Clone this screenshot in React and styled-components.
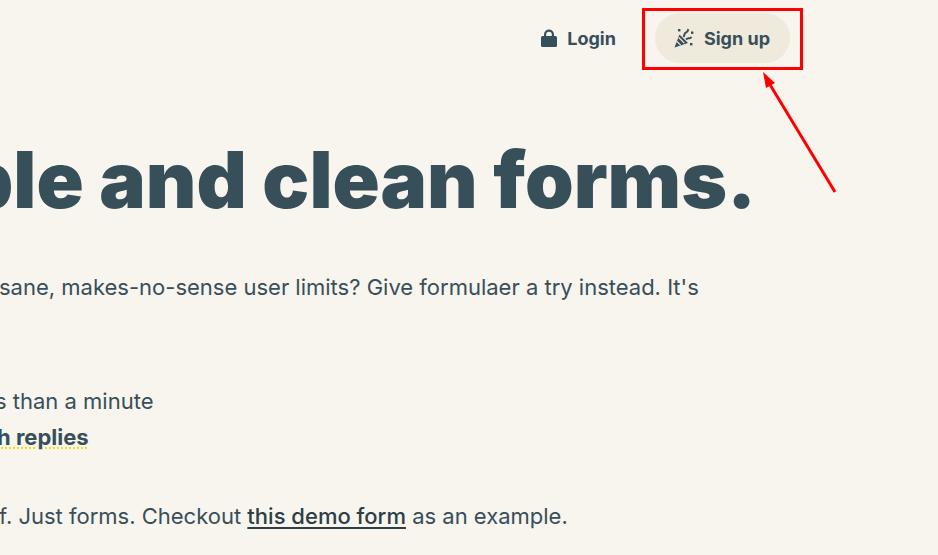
import React from "react";
import styled, { createGlobalStyle } from "styled-components";

const Global = createGlobalStyle`
  html, body { margin: 0; padding: 0; background: #f8f4ee; }
  body { width: 938px; height: 555px; overflow: hidden; font-family: Inter, "Liberation Sans", sans-serif; color: #374f59; }
`;
const Page = styled.div`
  position: relative;
  width: 938px;
  height: 555px;
  overflow: hidden;
`;
const Nav = styled.nav`
  display: flex;
  justify-content: flex-end;
  align-items: center;
  gap: 12px;
  height: 50px;
  padding: 13px 148px 0 0;
`;
const NavItem = styled.a`
  display: flex;
  align-items: center;
  gap: 10px;
  height: 50px;
  padding: 0 ${(p) => (p.$pill ? "20px" : "27px")} 0 ${(p) => (p.$pill ? "19px" : "0")};
  border-radius: 25px;
  background: ${(p) => (p.$pill ? "#f0eadd" : "transparent")};
  font-size: 18px;
  font-weight: 700;
  white-space: nowrap;
`;
const Title = styled.h1`
  margin: 74px 0 0 ${(p) => p.$shift}px;
  font-size: 78px;
  line-height: 86px;
  font-weight: 900;
  white-space: nowrap;
`;
const Text = styled.p`
  margin: ${(p) => p.$top}px 0 0 ${(p) => p.$shift}px;
  font-size: 22px;
  line-height: 36px;
  white-space: nowrap;
`;
const Strong = styled.strong`
  font-weight: 700;
  text-decoration: underline dotted #f5d90a 2px;
  text-underline-offset: 2px;
`;
const DemoLink = styled.a`
  font-weight: 500;
  color: #2c3e46;
  text-decoration: underline;
  text-underline-offset: 3px;
`;
const Highlight = styled.div`
  position: absolute;
  left: 642px;
  top: 8px;
  width: 161px;
  height: 62px;
  box-sizing: border-box;
  border: 3px solid #ff0000;
`;
const Arrow = styled.svg`
  position: absolute;
  left: 740px;
  top: 60px;
  width: 110px;
  height: 140px;
`;

const Lock = () => (
  <svg width="16" height="18" viewBox="0 0 16 18" fill="#374f59" aria-hidden="true">
    <path fillRule="evenodd" d="M3 7V5.500a5 5 0 0 1 10 0V7h1.500a1.500 1.500 0 0 1 1.500 1.500v8a1.500 1.500 0 0 1-1.500 1.500h-13A1.500 1.500 0 0 1 0 16.500v-8A1.500 1.500 0 0 1 1.500 7zm2.200 0h5.600V5.500a2.800 2.800 0 0 0-5.600 0z" />
  </svg>
);

const Popper = () => (
  <svg width="20" height="20" viewBox="0 0 20 20" fill="#374f59" aria-hidden="true">
    <path d="M0.500 19.500 5.500 6.500l8.500 8.500z" />
    <path d="M3 13.500 6.600 17.100M4.700 9.500 10.300 15.100" stroke="#f0eadd" strokeWidth="1.200" />
    <path d="M9.500 9c1-1.500.6-2.600 1.600-3.800.8-1 1.600-.8 2.200-1.700.5-.7.500-1.500 1.300-2.300M12 11.500c1.200-1.300 2.200-1.500 3-1.300 1 .2 1.600-.4 2.500-1.200" fill="none" stroke="#374f59" strokeWidth="2" />
    <rect x="4" y="1" width="2.400" height="2.400" />
    <rect x="17" y="3.500" width="2.400" height="2.400" />
    <rect x="16" y="15" width="2.400" height="2.400" />
  </svg>
);

export default function App() {
  return (
    <Page>
      <Global />
      <Nav>
        <NavItem><Lock />Login</NavItem>
        <NavItem $pill><Popper />Sign up</NavItem>
      </Nav>
      <Title $shift={-37}>ple and clean forms.</Title>
      <Text $top={46} $shift={-1}>sane, makes-no-sense user limits? Give formulaer a try instead. It's</Text>
      <Text $top={78} $shift={-5}>s than a minute</Text>
      <Text $top={0} $shift={-3}><Strong>h replies</Strong></Text>
      <Text $top={43} $shift={-1}>f. Just forms. Checkout <DemoLink>this demo form</DemoLink> as an example.</Text>
      <Highlight />
      <Arrow viewBox="0 0 110 140">
        <path d="M95 132 29 23" stroke="#ff0000" strokeWidth="3" fill="none" />
        <path d="M23 12 35 23 26 28z" fill="#ff0000" />
      </Arrow>
    </Page>
  );
}
